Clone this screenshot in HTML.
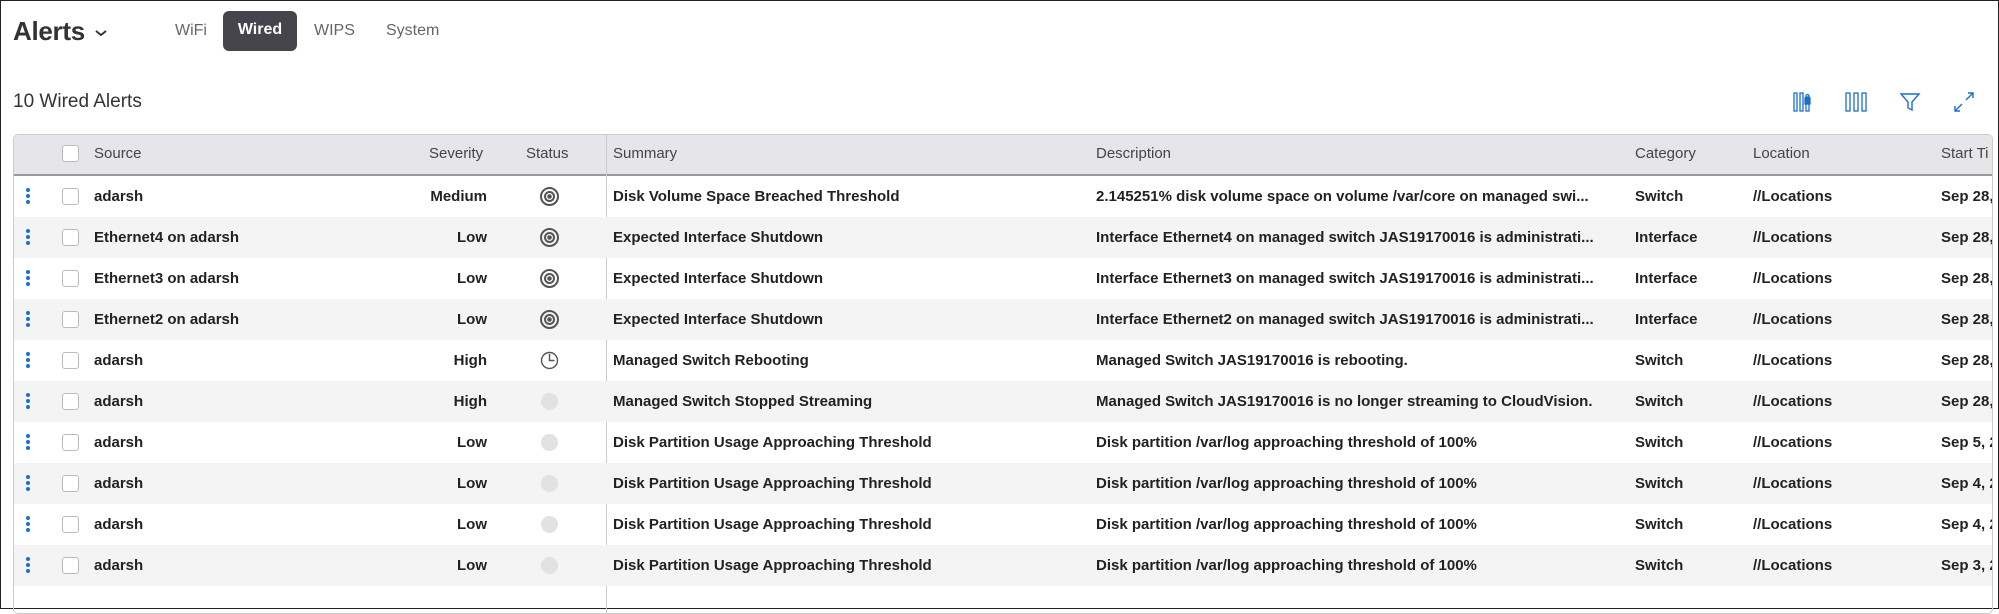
<!DOCTYPE html>
<html><head><meta charset="utf-8"><style>
*{box-sizing:border-box;margin:0;padding:0}
body{width:1999px;height:609px;overflow:hidden;background:#fff;font-family:"Liberation Sans",sans-serif;color:#222;position:relative}
.frame{position:absolute;left:0;top:0;width:1999px;height:609px;border:1px solid #222}
.abs{position:absolute;white-space:nowrap}
.title{left:13px;top:16px;font-size:26px;color:#333;font-weight:bold;letter-spacing:-0.3px}
.chev{left:94px;top:28px}
.tab{top:22px;font-size:16px;color:#666}
.wired{left:223px;top:11px;width:74px;height:40px;background:#45444d;border-radius:6px;color:#fff;font-weight:bold;font-size:16px;text-align:center;line-height:38px}
.count{left:13px;top:91px;font-size:19px;color:#333}
.table{position:absolute;left:13px;top:134px;width:1980px;height:480px;border:1px solid #ccc;border-radius:5px;overflow:hidden}
.hdr{position:absolute;left:0;top:0;width:100%;height:41px;background:#e6e6ea;border-bottom:2px solid #999}
.row{position:absolute;left:0;width:100%;height:41px}
.alt{background:#f4f4f4}
.c{position:absolute;white-space:nowrap;font-size:15px;line-height:41px;top:0}
.b{font-weight:bold;color:#222}
.h{color:#444;font-size:15px;line-height:37px}
.dots{position:absolute;left:12px;top:12px;width:4px}
.dots i{display:block;width:4px;height:4px;border-radius:2px;background:#1a6fd0;margin-bottom:2px}
.cb{position:absolute;left:48px;top:12px;width:17px;height:17px;border:1px solid #bbb;border-radius:3px;background:#fff}
.hdr .cb{top:10px}
.vd{position:absolute;left:592px;top:0;width:1px;height:100%;background:#ccc}
.st{position:absolute;left:525px;top:10px}
</style></head><body>
<div class="frame"></div>
<div class="abs title">Alerts</div>
<svg class="abs chev" width="14" height="10" viewBox="0 0 14 10" fill="none" stroke="#333" stroke-width="2"><path d="M2 3l5 4 5-4"/></svg>
<div class="abs tab" style="left:175px">WiFi</div>
<div class="abs wired">Wired</div>
<div class="abs tab" style="left:314px">WIPS</div>
<div class="abs tab" style="left:386px">System</div>
<div class="abs count">10 Wired Alerts</div>
<svg class="abs" style="left:1793px;top:91px" width="22" height="22" viewBox="0 0 22 22" fill="none" stroke="#1a6fd0" stroke-width="1.3"><rect x="1" y="2" width="3" height="18"/><rect x="7" y="2" width="3" height="18"/><rect x="13" y="6" width="3" height="14"/><rect x="12" y="7" width="5" height="6" fill="#1a6fd0"/><path d="M13 7V5a1.5 1.5 0 0 1 3 0v2"/></svg>
<svg class="abs" style="left:1845px;top:91px" width="22" height="22" viewBox="0 0 22 22" fill="none" stroke="#1a6fd0" stroke-width="1.3"><rect x="1" y="2" width="4" height="18"/><rect x="9" y="2" width="4" height="18"/><rect x="17" y="2" width="4" height="18"/></svg>
<svg class="abs" style="left:1899px;top:91px" width="22" height="22" viewBox="0 0 22 22" fill="none" stroke="#1a6fd0" stroke-width="1.4"><path d="M2 3h18l-7 8v8l-4-2v-6z"/></svg>
<svg class="abs" style="left:1953px;top:91px" width="22" height="22" viewBox="0 0 22 22" fill="none" stroke="#1a6fd0" stroke-width="1.4"><path d="M13 9l7-7M15 2h5v5M9 13l-7 7M2 15v5h5"/></svg>
<div class="table">
<div class="hdr">
<div class="cb"></div>
<div class="c h" style="left:80px">Source</div>
<div class="c h" style="left:415px">Severity</div>
<div class="c h" style="left:512px">Status</div>
<div class="c h" style="left:599px">Summary</div>
<div class="c h" style="left:1082px">Description</div>
<div class="c h" style="left:1621px">Category</div>
<div class="c h" style="left:1739px">Location</div>
<div class="c h" style="left:1927px">Start Ti</div>
</div>
<div class="vd"></div>
<div id="rows"></div>
</div>
<script>
var d=[
["adarsh","Medium","t","Disk Volume Space Breached Threshold","2.145251% disk volume space on volume /var/core on managed swi...","Switch","Sep 28,"],
["Ethernet4 on adarsh","Low","t","Expected Interface Shutdown","Interface Ethernet4 on managed switch JAS19170016 is administrati...","Interface","Sep 28,"],
["Ethernet3 on adarsh","Low","t","Expected Interface Shutdown","Interface Ethernet3 on managed switch JAS19170016 is administrati...","Interface","Sep 28,"],
["Ethernet2 on adarsh","Low","t","Expected Interface Shutdown","Interface Ethernet2 on managed switch JAS19170016 is administrati...","Interface","Sep 28,"],
["adarsh","High","c","Managed Switch Rebooting","Managed Switch JAS19170016 is rebooting.","Switch","Sep 28,"],
["adarsh","High","g","Managed Switch Stopped Streaming","Managed Switch JAS19170016 is no longer streaming to CloudVision.","Switch","Sep 28,"],
["adarsh","Low","g","Disk Partition Usage Approaching Threshold","Disk partition /var/log approaching threshold of 100%","Switch","Sep 5, 2"],
["adarsh","Low","g","Disk Partition Usage Approaching Threshold","Disk partition /var/log approaching threshold of 100%","Switch","Sep 4, 2"],
["adarsh","Low","g","Disk Partition Usage Approaching Threshold","Disk partition /var/log approaching threshold of 100%","Switch","Sep 4, 2"],
["adarsh","Low","g","Disk Partition Usage Approaching Threshold","Disk partition /var/log approaching threshold of 100%","Switch","Sep 3, 2"]];
var icons={t:'<svg width="21" height="21" viewBox="0 0 21 21" fill="none" stroke="#555" stroke-width="2"><circle cx="10.5" cy="10.5" r="8.5"/><circle cx="10.5" cy="10.5" r="4.5"/><circle cx="10.5" cy="10.5" r="1.3" fill="#555"/></svg>',
c:'<svg width="21" height="21" viewBox="0 0 21 21" fill="none" stroke="#555" stroke-width="1.4"><circle cx="10.5" cy="10.5" r="8"/><path d="M10.5 4v6.5h5"/></svg>',
g:'<svg width="21" height="21" viewBox="0 0 21 21"><circle cx="10.5" cy="10.5" r="8.5" fill="#e2e2e2"/></svg>'};
var h='';
d.forEach(function(r,i){
h+='<div class="row'+(i%2?' alt':'')+'" style="top:'+(41+i*41)+'px">'+
'<div class="dots"><i></i><i></i><i></i></div><div class="cb"></div>'+
'<div class="c b" style="left:80px">'+r[0]+'</div>'+
'<div class="c b" style="right:1505px">'+r[1]+'</div>'+
'<div class="st">'+icons[r[2]]+'</div>'+
'<div class="c b" style="left:599px">'+r[3]+'</div>'+
'<div class="c b" style="left:1082px">'+r[4]+'</div>'+
'<div class="c b" style="left:1621px">'+r[5]+'</div>'+
'<div class="c b" style="left:1739px">//Locations</div>'+
'<div class="c b" style="left:1927px">'+r[6]+'</div></div>';
});
document.getElementById('rows').innerHTML=h;
</script>
</body></html>
